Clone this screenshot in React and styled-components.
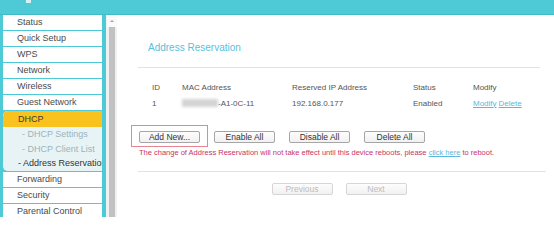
import React from 'react'
import styled, { createGlobalStyle } from 'styled-components'

const GlobalStyle = createGlobalStyle`
  html, body {
    margin: 0;
    padding: 0;
    background: #fff;
  }
  body {
    font-family: "Liberation Sans", Arial, sans-serif;
    overflow: hidden;
  }
`;

const Page = styled.div`
  width: 554px;
  height: 217px;
  display: flex;
  flex-direction: column;
  overflow: hidden;
`;

const TopBar = styled.div`
  height: 14px;
  flex: none;
  background: #4dcad5;
  border-bottom: 1px solid #40bcc7;
  position: relative;
`;

const Notch = styled.div`
  position: absolute;
  left: 26px;
  top: 0;
  width: 5px;
  height: 3px;
  background: #d8f2f4;
`;

const Body = styled.div`
  flex: 1;
  display: flex;
  min-height: 0;
`;

const Sidebar = styled.div`
  flex: none;
  background: #4dcad5;
  padding: 0 4px 0 3px;
  box-sizing: border-box;
  width: 106px;
  display: flex;
  flex-direction: column;
  gap: 1px;
  overflow: hidden;
`;

const MenuItem = styled.div`
  height: 15px;
  flex: none;
  background: #fff;
  color: #4a4a4a;
  font-size: 9px;
  line-height: 15px;
  padding-left: 14px;
  white-space: nowrap;
`;

const Group = styled.div`
  flex: none;
  background: #e8f3f6;
  border-radius: 5px 0 0 5px;
  overflow: hidden;
  margin-left: -1px;
  border-left: 1px solid #4dcad5;
`;

const GroupHead = styled.div`
  height: 16px;
  background: #f9c21c;
  color: #3a3a3a;
  font-size: 9px;
  line-height: 16px;
  padding-left: 15px;
  border-radius: 5px 0 0 0;
`;

const SubItem = styled.div`
  height: 14.6px;
  font-size: 9px;
  line-height: 14.6px;
  padding-left: ${p => (p.$active ? '15px' : '19px')};
  color: ${p => (p.$active ? '#333' : '#9cb4ba')};
  white-space: nowrap;
`;

const ScrollTrack = styled.div`
  width: 11px;
  flex: none;
  background: #f1f1f1;
  display: flex;
  flex-direction: column;
  align-items: center;
  padding-left: 1px;
  box-sizing: border-box;
`;

const ScrollArrow = styled.div`
  height: 12px;
  width: 100%;
  display: flex;
  align-items: center;
  justify-content: center;
  background: #fafafa;
  &::after {
    content: '';
    border-left: 2px solid transparent;
    border-right: 2px solid transparent;
    border-bottom: 2px solid #a0a0a0;
  }
`;

const ScrollThumb = styled.div`
  flex: 1;
  width: 6px;
  background: #c1c1c1;
`;

const Content = styled.div`
  flex: 1;
  padding: 27px 8px 0 21px;
  box-sizing: border-box;
  display: flex;
  flex-direction: column;
`;

const Title = styled.div`
  color: #5cc0d8;
  font-size: 10px;
  line-height: 12px;
  padding-left: 10px;
`;

const Rule = styled.div`
  height: 1px;
  background: #e2e2e2;
  margin: ${p => p.$m || '0'};
`;

const Table = styled.div`
  margin: 11px 0 0 14px;
  display: flex;
  flex-direction: column;
`;

const Row = styled.div`
  display: grid;
  grid-template-columns: 30px 110px 121px 60px 1fr;
  height: 16px;
  align-items: center;
  font-size: 8px;
  color: #555;
`;

const Blur = styled.span`
  display: inline-block;
  width: 36px;
  height: 8px;
  background: #d4d4d4;
  filter: blur(1.5px);
  vertical-align: middle;
`;

const LinkText = styled.span`
  color: #58b8de;
  text-decoration: underline;
  margin-right: ${p => p.$gap || 0};
`;

const Buttons = styled.div`
  display: flex;
  gap: 14px;
  margin-top: 20px;
  padding-left: 1px;
`;

const Highlight = styled.div`
  position: relative;
  display: flex;
  &::before {
    content: '';
    position: absolute;
    left: -8px;
    right: -8px;
    top: -6px;
    bottom: -4px;
    border: 1px solid #e88592;
  }
`;

const Button = styled.button`
  width: 61px;
  height: 12px;
  padding: 0;
  box-sizing: border-box;
  font-family: inherit;
  font-size: 8.5px;
  line-height: 10px;
  color: ${p => (p.$disabled ? '#bdbdbd' : '#333')};
  background: linear-gradient(#fdfdfd, #f1f1f1);
  border: 1px solid ${p => (p.$disabled ? '#d6d6d6' : '#a6a6a6')};
  border-radius: 2px;
`;

const Notice = styled.div`
  margin-top: 5px;
  padding-left: 1px;
  color: #c8336a;
  font-size: 7.5px;
  line-height: 10px;
  white-space: nowrap;
`;

const Pager = styled.div`
  display: flex;
  justify-content: center;
  gap: 13px;
  margin-top: 11px;
  padding-right: 6px;
`;

const menuTop = ['Status', 'Quick Setup', 'WPS', 'Network', 'Wireless', 'Guest Network']
const menuBottom = ['Forwarding', 'Security', 'Parental Control']
const subs = [
  { label: '- DHCP Settings' },
  { label: '- DHCP Client List' },
  { label: '- Address Reservation', active: true },
]

export default function App() {
  return (
    <Page>
      <GlobalStyle />
      <TopBar>
        <Notch />
      </TopBar>
      <Body>
        <Sidebar>
          {menuTop.map(m => (
            <MenuItem key={m}>{m}</MenuItem>
          ))}
          <Group>
            <GroupHead>DHCP</GroupHead>
            {subs.map(s => (
              <SubItem key={s.label} $active={s.active}>{s.label}</SubItem>
            ))}
          </Group>
          {menuBottom.map(m => (
            <MenuItem key={m}>{m}</MenuItem>
          ))}
        </Sidebar>
        <ScrollTrack>
          <ScrollArrow />
          <ScrollThumb />
        </ScrollTrack>
        <Content>
          <Title>Address Reservation</Title>
          <Rule $m="13px 6px 0 0" />
          <Table>
            <Row>
              <span>ID</span>
              <span>MAC Address</span>
              <span>Reserved IP Address</span>
              <span>Status</span>
              <span>Modify</span>
            </Row>
            <Row>
              <span>1</span>
              <span><Blur />-A1-0C-11</span>
              <span>192.168.0.177</span>
              <span>Enabled</span>
              <span>
                <LinkText $gap="2px">Modify</LinkText>
                <LinkText>Delete</LinkText>
              </span>
            </Row>
          </Table>
          <Buttons>
            <Highlight>
              <Button>Add New...</Button>
            </Highlight>
            <Button>Enable All</Button>
            <Button>Disable All</Button>
            <Button>Delete All</Button>
          </Buttons>
          <Notice>
            The change of Address Reservation will not take effect until this device reboots, please{' '}
            <LinkText>click here</LinkText> to reboot.
          </Notice>
          <Rule $m="13px 0 0 0" />
          <Pager>
            <Button $disabled>Previous</Button>
            <Button $disabled>Next</Button>
          </Pager>
        </Content>
      </Body>
    </Page>
  )
}
